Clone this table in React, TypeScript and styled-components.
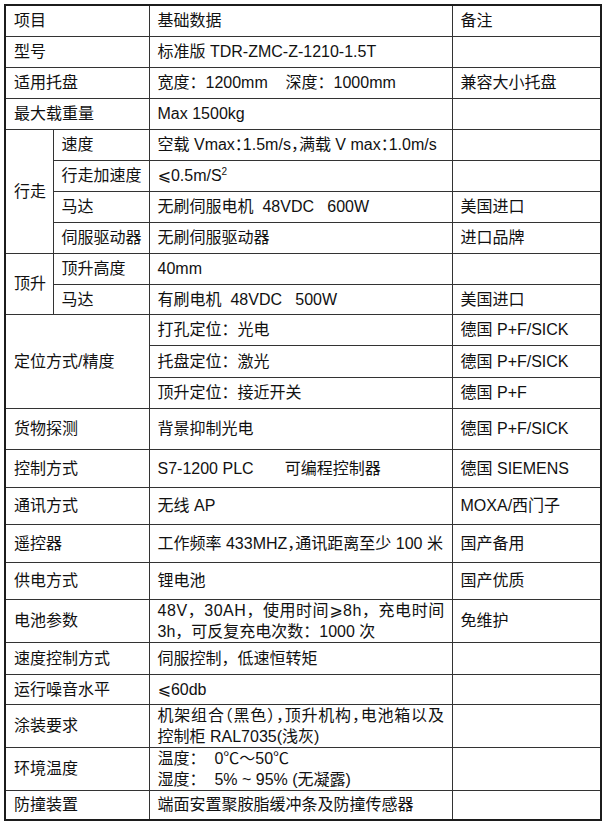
import React from 'react';
import styled, { createGlobalStyle } from 'styled-components';

const GlobalStyle = createGlobalStyle`
  html, body {
    margin: 0;
    padding: 0;
    background: #fff;
  }
  body {
    font-family: "Liberation Sans", Arial, "Noto Sans CJK SC", "DejaVu Sans", sans-serif;
    color: #111;
  }
`;

const Sheet = styled.table`
  margin: 4px 0 0 4px;
  border-collapse: collapse;
  table-layout: fixed;
  width: 596px;
  border: 2px solid #1c1c1c;
  font-size: 16px;
`;

const Row = styled.tr<{ $h: number }>`
  height: ${(p) => p.$h}px;
`;

// $tight squeezes full-width punctuation the way the word processor did
const Cell = styled.td<{ $tight?: boolean }>`
  border: 1px solid #333;
  padding: 0 6px 0 8px;
  vertical-align: middle;
  white-space: pre;
  line-height: 21px;
  overflow: hidden;
  font-feature-settings: ${(p) => (p.$tight ? '"halt"' : 'normal')};
`;

const Spread = styled.span<{ $ls: number }>`
  letter-spacing: ${(p) => p.$ls}px;
`;

const Sup = styled.sup`
  font-size: 10px;
  line-height: 0;
  vertical-align: 6px;
`;

const App = () => (
  <>
    <GlobalStyle />
    <Sheet>
      <colgroup>
        <col style={{ width: 48 }} />
        <col style={{ width: 96 }} />
        <col style={{ width: 303 }} />
        <col style={{ width: 149 }} />
      </colgroup>
      <tbody>
        <Row $h={31}>
          <Cell colSpan={2}>项目</Cell>
          <Cell>基础数据</Cell>
          <Cell>备注</Cell>
        </Row>
        <Row $h={31}>
          <Cell colSpan={2}>型号</Cell>
          <Cell>标准版 TDR-ZMC-Z-1210-1.5T</Cell>
          <Cell />
        </Row>
        <Row $h={31}>
          <Cell colSpan={2}>适用托盘</Cell>
          <Cell>{'宽度：1200mm    深度：1000mm'}</Cell>
          <Cell>兼容大小托盘</Cell>
        </Row>
        <Row $h={31}>
          <Cell colSpan={2}>最大载重量</Cell>
          <Cell>Max 1500kg</Cell>
          <Cell />
        </Row>

        {/* 行走 group */}
        <Row $h={31}>
          <Cell rowSpan={4}>行走</Cell>
          <Cell>速度</Cell>
          <Cell $tight>空载 Vmax：1.5m/s，满载 V max：1.0m/s</Cell>
          <Cell />
        </Row>
        <Row $h={31}>
          <Cell>行走加速度</Cell>
          <Cell>
            ⩽0.5m/S<Sup>2</Sup>
          </Cell>
          <Cell />
        </Row>
        <Row $h={31}>
          <Cell>马达</Cell>
          <Cell>{'无刷伺服电机  48VDC   600W'}</Cell>
          <Cell>美国进口</Cell>
        </Row>
        <Row $h={31}>
          <Cell>伺服驱动器</Cell>
          <Cell>无刷伺服驱动器</Cell>
          <Cell>进口品牌</Cell>
        </Row>

        {/* 顶升 group */}
        <Row $h={31}>
          <Cell rowSpan={2}>顶升</Cell>
          <Cell>顶升高度</Cell>
          <Cell>40mm</Cell>
          <Cell />
        </Row>
        <Row $h={30}>
          <Cell>马达</Cell>
          <Cell>{'有刷电机  48VDC   500W'}</Cell>
          <Cell>美国进口</Cell>
        </Row>

        {/* 定位 group */}
        <Row $h={31}>
          <Cell colSpan={2} rowSpan={3}>
            定位方式/精度
          </Cell>
          <Cell>打孔定位：光电</Cell>
          <Cell>德国 P+F/SICK</Cell>
        </Row>
        <Row $h={32}>
          <Cell>托盘定位：激光</Cell>
          <Cell>德国 P+F/SICK</Cell>
        </Row>
        <Row $h={31}>
          <Cell>顶升定位：接近开关</Cell>
          <Cell>德国 P+F</Cell>
        </Row>

        <Row $h={41}>
          <Cell colSpan={2}>货物探测</Cell>
          <Cell>背景抑制光电</Cell>
          <Cell>德国 P+F/SICK</Cell>
        </Row>
        <Row $h={38}>
          <Cell colSpan={2}>控制方式</Cell>
          <Cell>{'S7-1200 PLC       可编程控制器'}</Cell>
          <Cell>德国 SIEMENS</Cell>
        </Row>
        <Row $h={37}>
          <Cell colSpan={2}>通讯方式</Cell>
          <Cell>无线 AP</Cell>
          <Cell>MOXA/西门子</Cell>
        </Row>
        <Row $h={38}>
          <Cell colSpan={2}>遥控器</Cell>
          <Cell $tight>工作频率 433MHZ，通讯距离至少 100 米</Cell>
          <Cell>国产备用</Cell>
        </Row>
        <Row $h={37}>
          <Cell colSpan={2}>供电方式</Cell>
          <Cell>锂电池</Cell>
          <Cell>国产优质</Cell>
        </Row>
        <Row $h={42}>
          <Cell colSpan={2}>电池参数</Cell>
          <Cell>
            <Spread $ls={0.55}>48V，30AH，使用时间⩾8h，充电时间</Spread>
            <br />
            3h，可反复充电次数：1000 次
          </Cell>
          <Cell>免维护</Cell>
        </Row>
        <Row $h={32}>
          <Cell colSpan={2}>速度控制方式</Cell>
          <Cell>伺服控制，低速恒转矩</Cell>
          <Cell />
        </Row>
        <Row $h={30}>
          <Cell colSpan={2}>运行噪音水平</Cell>
          <Cell>⩽60db</Cell>
          <Cell />
        </Row>
        <Row $h={42}>
          <Cell colSpan={2}>涂装要求</Cell>
          <Cell $tight>
            <Spread $ls={0.8}>机架组合（黑色），顶升机构，电池箱以及</Spread>
            <br />
            控制柜 RAL7035(浅灰)
          </Cell>
          <Cell />
        </Row>
        <Row $h={43}>
          <Cell colSpan={2}>环境温度</Cell>
          <Cell>
            {'温度：  0℃～50℃'}
            <br />
            {'湿度：  5% ~ 95% (无凝露)'}
          </Cell>
          <Cell />
        </Row>
        <Row $h={30}>
          <Cell colSpan={2}>防撞装置</Cell>
          <Cell>端面安置聚胺脂缓冲条及防撞传感器</Cell>
          <Cell />
        </Row>
      </tbody>
    </Sheet>
  </>
);

export default App;
